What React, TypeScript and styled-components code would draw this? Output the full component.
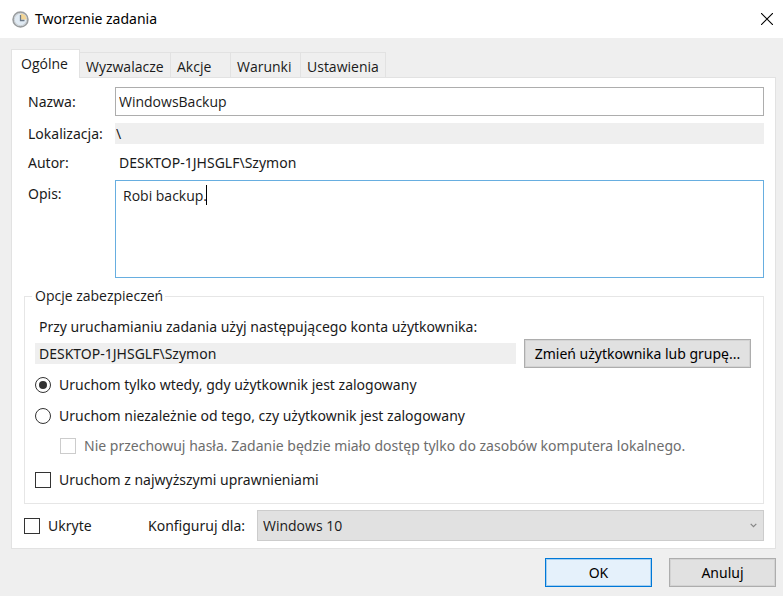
import React, { useState } from "react";
import styled, { createGlobalStyle } from "styled-components";

const GlobalStyle = createGlobalStyle`
  *, *::before, *::after { box-sizing: border-box; }
  body {
    margin: 0;
    background: #efefef;
    color: #1a1a1a;
    font: 14px/20px "Noto Sans", "Open Sans", sans-serif;
  }
  button, input, textarea, select { font: inherit; color: inherit; margin: 0; }
`;

const Dialog = styled.form`
  display: flex;
  flex-direction: column;
  min-height: 100vh;
  background: #efefef;
`;

const TitleBar = styled.header`
  display: flex;
  align-items: center;
  gap: 6px;
  height: 38px;
  padding: 0 10px 0 12px;
  background: #fff;
`;

const Title = styled.h1`
  flex: 1;
  margin: 0;
  font-size: 14px;
  font-weight: 400;
  color: #000;
`;

const CloseButton = styled.button`
  display: flex;
  padding: 0;
  border: 0;
  background: none;
`;

const Content = styled.main`
  padding: 11px 7px 0 11px;
`;

const TabList = styled.div`
  display: flex;
  align-items: flex-end;
`;

const Tab = styled.button<{ $active?: boolean; $width: number }>`
  min-width: ${(p) => p.$width}px;
  height: ${(p) => (p.$active ? 29 : 25)}px;
  padding: ${(p) => (p.$active ? "0 8px 0 9px" : "3px 6px 0")};
  border: 1px solid #e2e2e2;
  border-bottom: 0;
  border-left-width: ${(p) => (p.$active ? 1 : 0)}px;
  background: ${(p) => (p.$active ? "#fff" : "#efefef")};
  margin-bottom: ${(p) => (p.$active ? -1 : 0)}px;
  z-index: ${(p) => (p.$active ? 1 : 0)};
  font-family: "Open Sans", "Noto Sans", sans-serif;
  line-height: 20px;
  text-align: left;
  white-space: nowrap;
`;

const Panel = styled.section`
  padding: 9px 11px 7px 12px;
  border: 1px solid #e2e2e2;
  background: #fff;
`;

const FieldRow = styled.div<{ $height: number; $gap?: number; $top?: boolean }>`
  display: grid;
  grid-template-columns: 91px minmax(0, 1fr);
  align-items: ${(p) => (p.$top ? "start" : "center")};
  min-height: ${(p) => p.$height}px;
  margin-bottom: ${(p) => p.$gap ?? 0}px;
`;

const FieldLabel = styled.label<{ $top?: boolean }>`
  padding: ${(p) => (p.$top ? "4px 0 0 4px" : "0 0 0 4px")};
  white-space: nowrap;
`;

const NameInput = styled.input`
  width: 100%;
  height: 29px;
  padding: 0 3px;
  border: 1px solid #adadad;
  border-radius: 0;
  background: #fff;
  outline: 0;
  font-family: "Open Sans", "Noto Sans", sans-serif;
`;

const ReadOnlyInput = styled.input`
  display: block;
  flex: 1;
  width: 100%;
  min-width: 0;
  height: 21px;
  padding: 0 4px;
  border: 0;
  background: #efefef;
  outline: 0;
`;

const LocationInput = styled(ReadOnlyInput)`
  padding: 0 1px;
`;

const Author = styled.output`
  padding-left: 4px;
`;

const DescriptionBox = styled.div`
  position: relative;
  display: flex;
`;

const Description = styled.textarea`
  flex: 1;
  height: 98px;
  padding: 5px 7px;
  border: 1px solid #67aee0;
  border-radius: 0;
  background: #fff;
  caret-color: transparent;
  outline: 0;
  resize: none;
  font-family: "Open Sans", "Noto Sans", sans-serif;
`;

const Caret = styled.span`
  position: absolute;
  top: 5px;
  left: 91px;
  width: 1px;
  height: 20px;
  background: #000;
`;

const Security = styled.fieldset`
  min-width: 0;
  margin: 8px 0 6px;
  padding: 11px 12px 13px 10px;
  border: 1px solid #e6e6e6;
`;

const Legend = styled.legend`
  padding: 0 2px 0 3px;
  margin-left: -3px;
  font-family: "Open Sans", "Noto Sans", sans-serif;
`;

const AccountLabel = styled.label`
  display: block;
  padding-left: 4px;
  margin-bottom: 2px;
`;

const AccountRow = styled.div`
  display: flex;
  align-items: center;
  gap: 8px;
  margin-bottom: 7px;
`;

const Button = styled.button<{ $primary?: boolean; $width: number }>`
  min-width: ${(p) => p.$width}px;
  height: 29px;
  padding: 0 6px;
  border: 1px solid ${(p) => (p.$primary ? "#0078d7" : "#adadad")};
  border-radius: 0;
  background: ${(p) => (p.$primary ? "#e5f1fb" : "#e1e1e1")};
  box-shadow: inset 0 0 0 1px ${(p) => (p.$primary ? "#a3cff2" : "#d3d3d3")};
  color: #000;
  white-space: nowrap;
`;

const Option = styled.label<{ $gap?: number; $indent?: boolean; $muted?: boolean }>`
  display: flex;
  align-items: center;
  gap: 8px;
  height: 20px;
  padding-left: ${(p) => (p.$indent ? 25 : 0)}px;
  margin-bottom: ${(p) => p.$gap ?? 0}px;
  color: ${(p) => (p.$muted ? "#6d6d6d" : "inherit")};
  white-space: nowrap;
`;

const Radio = styled.input`
  appearance: none;
  display: grid;
  place-items: center;
  flex: none;
  width: 16px;
  height: 16px;
  border: 1px solid #333;
  border-radius: 50%;
  background: #fff;
  &:checked::before {
    content: "";
    width: 8px;
    height: 8px;
    border-radius: 50%;
    background: #333;
  }
`;

const CheckBox = styled.input`
  appearance: none;
  display: grid;
  place-items: center;
  flex: none;
  width: 16px;
  height: 16px;
  border: 1px solid #333;
  background: #fff;
  &:disabled { border-color: #ccc; }
  &:checked::before {
    content: "";
    width: 9px;
    height: 5px;
    border: solid #333;
    border-width: 0 0 2px 2px;
    transform: rotate(-45deg);
  }
`;

const ConfigRow = styled.div`
  display: grid;
  grid-template-columns: 124px 109px minmax(0, 1fr);
  align-items: center;
`;

const SelectBox = styled.div`
  position: relative;
  display: flex;
  svg { position: absolute; right: 7px; top: 13px; pointer-events: none; }
`;

const Select = styled.select`
  appearance: none;
  flex: 1;
  height: 31px;
  padding: 0 24px 0 5px;
  border: 1px solid #ccc;
  border-radius: 0;
  background: #e1e1e1;
  font-family: "Open Sans", "Noto Sans", sans-serif;
`;

const Actions = styled.footer`
  display: flex;
  justify-content: flex-end;
  gap: 17px;
  padding: 9px 7px 8px;
`;

const ClockIcon = () => (
  <svg width="17" height="17" viewBox="0 0 17 17" aria-hidden="true">
    <circle cx="8.5" cy="8.5" r="7.4" fill="#e1ebf4" stroke="#9a9d9f" strokeWidth="1.7" />
    <circle cx="8.5" cy="8.5" r="6.2" fill="none" stroke="#c9ced2" strokeWidth="1" />
    <path d="M8.5 8.5V2.4A6.1 6.1 0 0 1 14.6 8.5Z" fill="#f3d595" />
    <path d="M8.5 4V9.5H12.5" fill="none" stroke="#6d7a88" strokeWidth="1.3" />
  </svg>
);

const CloseIcon = () => (
  <svg width="12" height="12" viewBox="0 0 12 12" aria-hidden="true">
    <path d="M0 0L12 12M12 0L0 12" stroke="#000" strokeWidth="1.1" />
  </svg>
);

const ChevronIcon = () => (
  <svg width="7" height="5" viewBox="0 0 7 5" aria-hidden="true">
    <path d="M.7.9L3.5 3.7L6.3.9" fill="none" stroke="#858585" strokeWidth="1.2" />
  </svg>
);

const tabs = [
  { name: "Ogólne", width: 69 },
  { name: "Wyzwalacze", width: 91 },
  { name: "Akcje", width: 60 },
  { name: "Warunki", width: 70 },
  { name: "Ustawienia", width: 85 },
];

export default function App() {
  const [tab, setTab] = useState("Ogólne");
  const [description, setDescription] = useState("Robi backup.");

  return (
    <>
      <GlobalStyle />
      <Dialog onSubmit={(e) => e.preventDefault()}>
        <TitleBar>
          <ClockIcon />
          <Title>Tworzenie zadania</Title>
          <CloseButton type="button" aria-label="Zamknij"><CloseIcon /></CloseButton>
        </TitleBar>
        <Content>
          <TabList role="tablist">
            {tabs.map((t) => (
              <Tab
                key={t.name}
                type="button"
                role="tab"
                aria-selected={tab === t.name}
                $active={tab === t.name}
                $width={t.width}
                onClick={() => setTab(t.name)}
              >
                {t.name}
              </Tab>
            ))}
          </TabList>
          <Panel role="tabpanel">
            <FieldRow $height={29} $gap={7}>
              <FieldLabel htmlFor="name">Nazwa:</FieldLabel>
              <NameInput id="name" defaultValue="WindowsBackup" />
            </FieldRow>
            <FieldRow $height={21} $gap={2}>
              <FieldLabel htmlFor="location">Lokalizacja:</FieldLabel>
              <LocationInput id="location" readOnly value="\" />
            </FieldRow>
            <FieldRow $height={34}>
              <FieldLabel htmlFor="author">Autor:</FieldLabel>
              <Author id="author">DESKTOP-1JHSGLF\Szymon</Author>
            </FieldRow>
            <FieldRow $height={98} $top>
              <FieldLabel htmlFor="description" $top>Opis:</FieldLabel>
              <DescriptionBox>
                <Description
                  id="description"
                  spellCheck={false}
                  value={description}
                  onChange={(e) => setDescription(e.target.value)}
                />
                {description === "Robi backup." && <Caret />}
              </DescriptionBox>
            </FieldRow>
            <Security>
              <Legend>Opcje zabezpieczeń</Legend>
              <AccountLabel htmlFor="account">
                Przy uruchamianiu zadania użyj następującego konta użytkownika:
              </AccountLabel>
              <AccountRow>
                <ReadOnlyInput id="account" readOnly value="DESKTOP-1JHSGLF\Szymon" />
                <Button type="button" $width={227}>Zmień użytkownika lub grupę...</Button>
              </AccountRow>
              <Option $gap={11}>
                <Radio type="radio" name="run" defaultChecked />
                Uruchom tylko wtedy, gdy użytkownik jest zalogowany
              </Option>
              <Option $gap={10}>
                <Radio type="radio" name="run" />
                Uruchom niezależnie od tego, czy użytkownik jest zalogowany
              </Option>
              <Option $gap={14} $indent $muted>
                <CheckBox type="checkbox" disabled />
                Nie przechowuj hasła. Zadanie będzie miało dostęp tylko do zasobów komputera lokalnego.
              </Option>
              <Option>
                <CheckBox type="checkbox" />
                Uruchom z najwyższymi uprawnieniami
              </Option>
            </Security>
            <ConfigRow>
              <Option>
                <CheckBox type="checkbox" />
                Ukryte
              </Option>
              <label htmlFor="system">Konfiguruj dla:</label>
              <SelectBox>
                <Select id="system" defaultValue="Windows 10">
                  <option>Windows 10</option>
                </Select>
                <ChevronIcon />
              </SelectBox>
            </ConfigRow>
          </Panel>
        </Content>
        <Actions>
          <Button type="submit" $primary $width={107}>OK</Button>
          <Button type="button" $width={107}>Anuluj</Button>
        </Actions>
      </Dialog>
    </>
  );
}
